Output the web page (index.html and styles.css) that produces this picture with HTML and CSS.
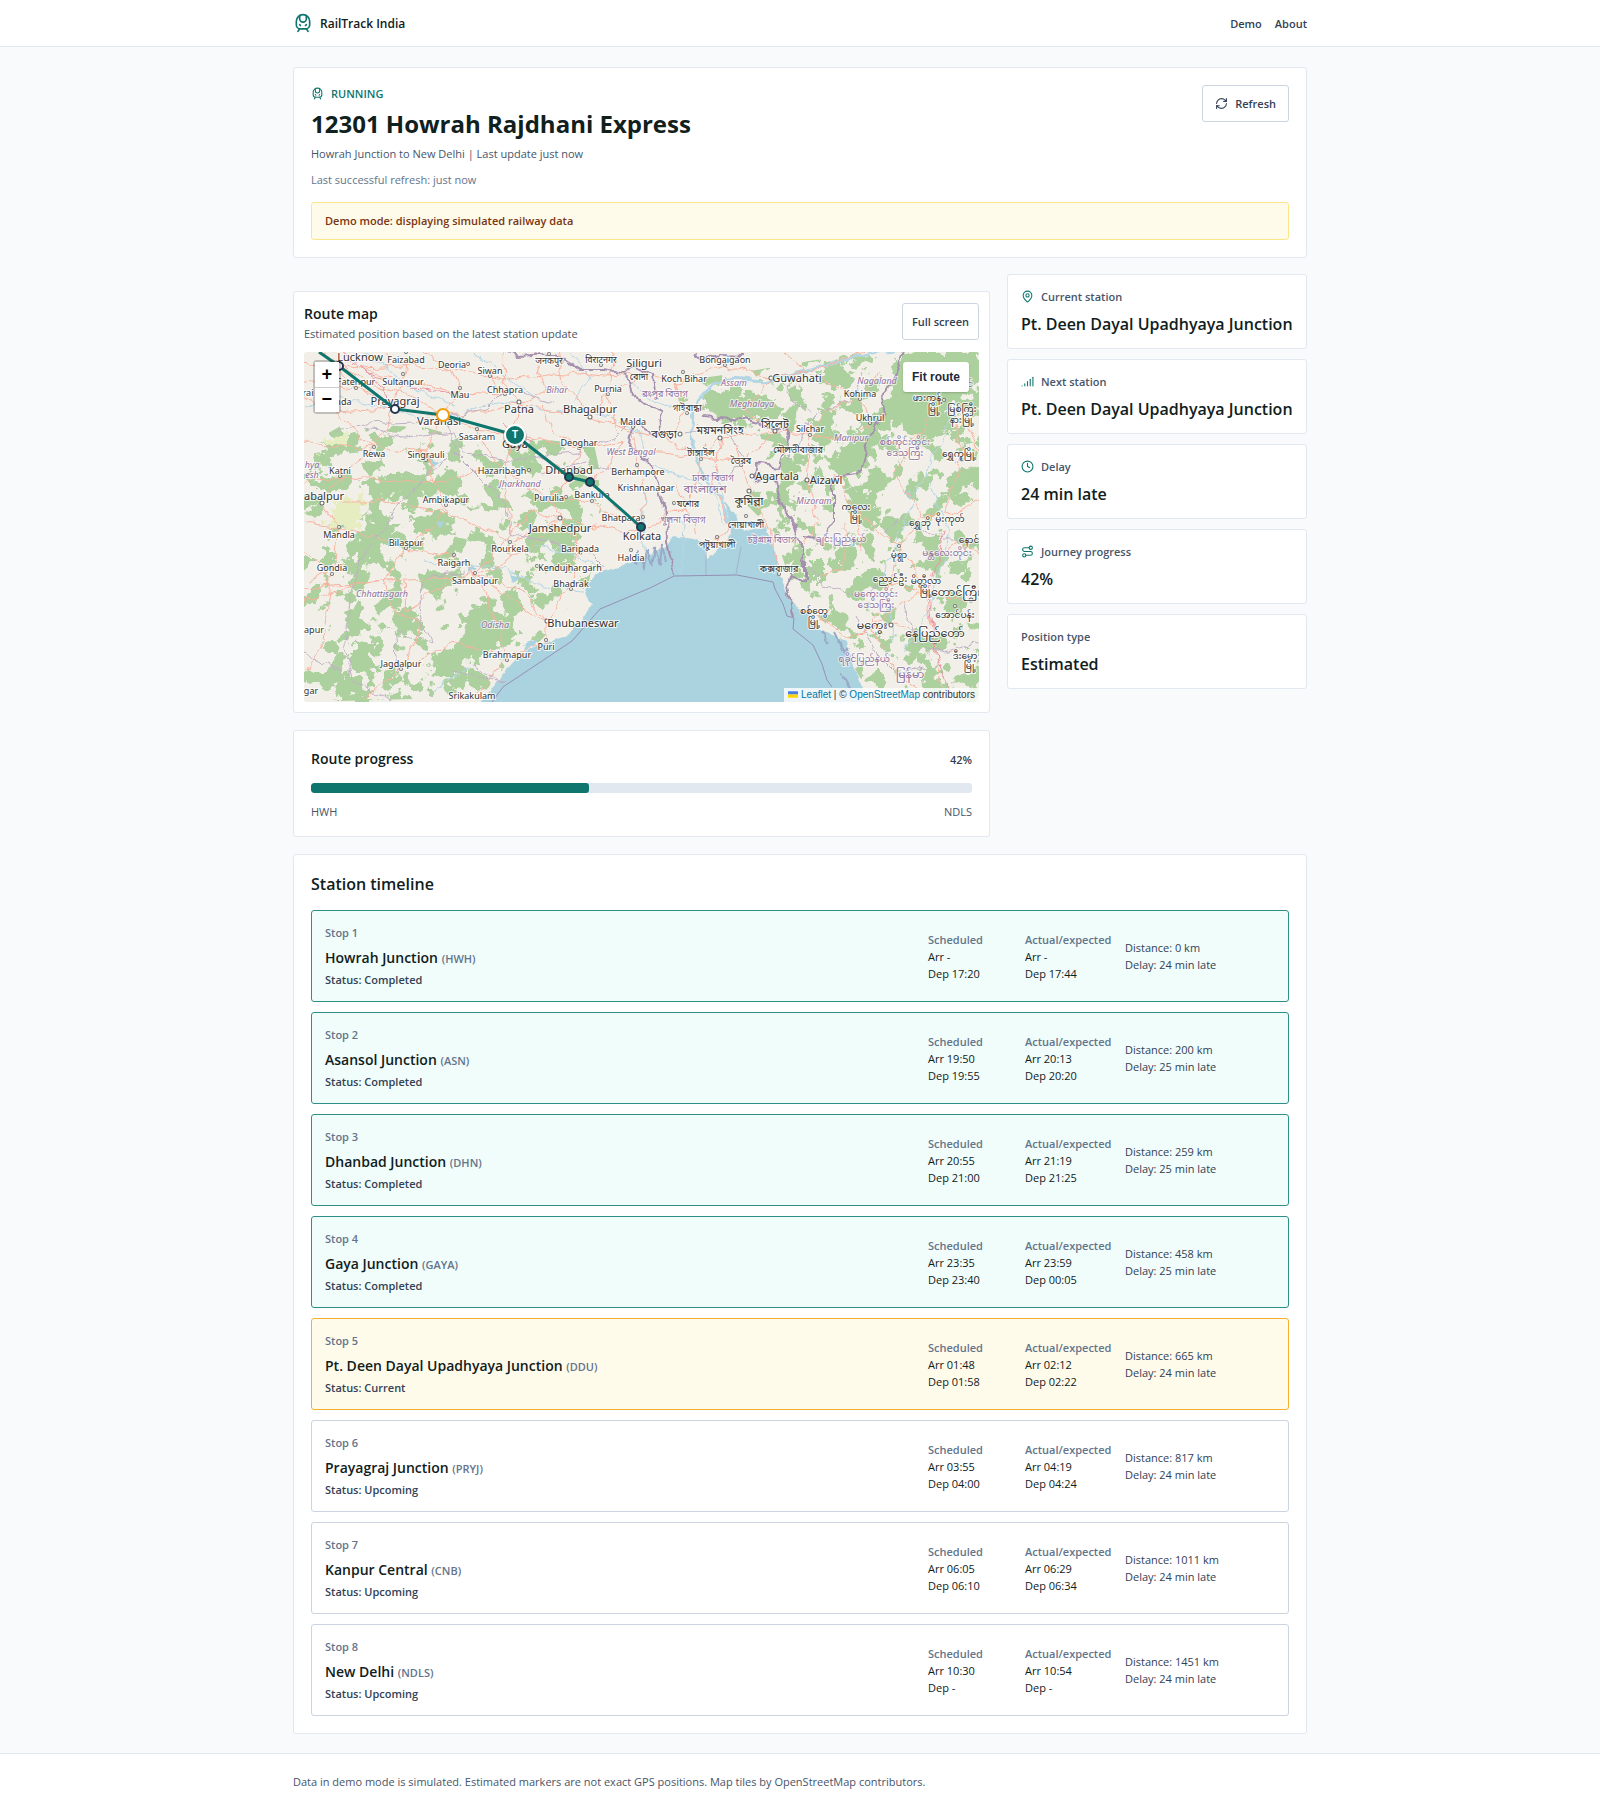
FILE: index.html
```html
<!DOCTYPE html>
<html lang="en">
<head>
<meta charset="utf-8">
<meta name="viewport" content="width=device-width, initial-scale=1">
<title>12301 Howrah Rajdhani Express - RailTrack India</title>
<link rel="stylesheet" href="styles.css">
</head>
<body>
<svg class="sprite" aria-hidden="true">
  <symbol id="i-train" viewBox="0 0 24 24"><path d="M8 3.1V7a4 4 0 0 0 8 0V3.1"/><path d="m9 15-1-1"/><path d="m15 15 1-1"/><path d="M9 19c-2.8 0-5-2.2-5-5v-4a8 8 0 0 1 16 0v4c0 2.8-2.2 5-5 5Z"/><path d="m8 19-2 3"/><path d="m16 19 2 3"/></symbol>
  <symbol id="i-refresh" viewBox="0 0 24 24"><path d="M3 12a9 9 0 0 1 9-9 9.75 9.75 0 0 1 6.74 2.74L21 8"/><path d="M21 3v5h-5"/><path d="M21 12a9 9 0 0 1-9 9 9.75 9.75 0 0 1-6.74-2.74L3 16"/><path d="M8 16H3v5"/></symbol>
  <symbol id="i-pin" viewBox="0 0 24 24"><path d="M20 10c0 4.993-5.539 10.193-7.399 11.799a1 1 0 0 1-1.202 0C9.539 20.193 4 14.993 4 10a8 8 0 0 1 16 0"/><circle cx="12" cy="10" r="3"/></symbol>
  <symbol id="i-signal" viewBox="0 0 24 24"><path d="M2 20h.01"/><path d="M7 20v-4"/><path d="M12 20v-8"/><path d="M17 20V8"/><path d="M22 4v16"/></symbol>
  <symbol id="i-clock" viewBox="0 0 24 24"><circle cx="12" cy="12" r="10"/><path d="M12 6v6l4 2"/></symbol>
  <symbol id="i-route" viewBox="0 0 24 24"><circle cx="6" cy="19" r="3"/><path d="M9 19h8.5a3.5 3.5 0 0 0 0-7h-11a3.5 3.5 0 0 1 0-7H15"/><circle cx="18" cy="5" r="3"/></symbol>
</svg>

<header class="site-header">
  <div class="container site-header-row">
    <a class="brand" href="#"><svg class="icon icon-lg"><use href="#i-train"/></svg>RailTrack India</a>
    <nav class="nav"><a href="#demo">Demo</a><a href="#about">About</a></nav>
  </div>
</header>

<main class="container main">
  <section class="card hero">
    <div class="hero-top">
      <div>
        <p class="running"><svg class="icon"><use href="#i-train"/></svg>RUNNING</p>
        <h1>12301 Howrah Rajdhani Express</h1>
        <p class="route-name">Howrah Junction to New Delhi | Last update just now</p>
        <p class="refreshed">Last successful refresh: just now</p>
      </div>
      <button class="btn" type="button"><svg class="icon"><use href="#i-refresh"/></svg>Refresh</button>
    </div>
    <p class="notice">Demo mode: displaying simulated railway data</p>
  </section>

  <div class="columns">
    <div class="left">
      <section class="card map-card">
        <div class="map-head">
          <div>
            <h2>Route map</h2>
            <p class="muted">Estimated position based on the latest station update</p>
          </div>
          <button class="btn btn-tight" type="button">Full screen</button>
        </div>
        <div class="map">
          <svg class="map-art" viewBox="0 0 675 350" preserveAspectRatio="xMidYMid slice" role="img" aria-label="Map of the route from Kolkata to Lucknow">
            <defs>
              <filter id="rough" x="-5%" y="-5%" width="110%" height="110%"><feTurbulence type="fractalNoise" baseFrequency="0.09" numOctaves="4" seed="4"/><feDisplacementMap in="SourceGraphic" scale="26" xChannelSelector="R" yChannelSelector="G"/></filter>
              <filter id="wiggle" filterUnits="userSpaceOnUse" x="-10" y="-10" width="700" height="375"><feTurbulence type="fractalNoise" baseFrequency="0.06" numOctaves="3" seed="9"/><feDisplacementMap in="SourceGraphic" scale="12" xChannelSelector="R" yChannelSelector="G"/></filter>
              <filter id="coast" filterUnits="userSpaceOnUse" x="-10" y="-10" width="700" height="375"><feTurbulence type="fractalNoise" baseFrequency="0.12" numOctaves="2" seed="2"/><feDisplacementMap in="SourceGraphic" scale="5" xChannelSelector="R" yChannelSelector="G"/></filter>
              <filter id="patches" filterUnits="userSpaceOnUse" x="0" y="0" width="675" height="350" color-interpolation-filters="sRGB"><feTurbulence type="fractalNoise" baseFrequency="0.05" numOctaves="5" seed="12"/><feColorMatrix values="0 0 0 0 0.678  0 0 0 0 0.82  0 0 0 0 0.62  40 0 0 0 -22.4"/><feComposite in2="SourceGraphic" operator="in"/></filter>
            </defs>
            <rect width="675" height="350" class="land"/>
            <path filter="url(#patches)" d="M0 95 40 72 120 75 190 95 240 88 290 92 300 140 290 200 285 230 240 285 180 345 0 350ZM370 30 440 20 560 0 675 0V350H570L530 280 490 240 470 180 440 150 470 90 380 70Z"/>
            <g class="forest" filter="url(#rough)">
              <path d="M398 42 415 34 430 40 450 38 470 48 478 60 468 68 445 66 420 66 398 60Z"/>
              <path d="M520 10 542 8 545 25 538 36 520 30Z"/>
              <path d="M600 0H675V35L650 50 640 80 610 85 590 70 570 92 560 125 530 120 525 105 545 90 560 70 585 50 590 20Z"/>
              <path d="M512 60 530 55 528 85 515 100 508 90Z"/>
              <path d="M475 105 490 105 488 140 480 175 474 150Z"/>
              <path d="M550 135 575 140 572 180 558 175 545 150Z"/>
              <path d="M530 195 550 190 552 215 532 213Z"/>
              <path d="M486 190 500 195 500 228 490 220ZM507 210 518 210 518 230 507 230Z"/>
              <path d="M635 140 655 115 672 128 650 145ZM640 75 660 75 655 95ZM645 210 665 200 660 222 648 225ZM616 300 630 310 640 345 620 340Z"/>
              <path d="M55 130 90 122 150 125 155 140 120 142 80 145Z"/>
              <path d="M110 165 140 160 150 180 130 188 110 182Z"/>
              <path d="M160 260 185 250 190 262 210 258 205 290 175 300 150 330 125 325 140 300 160 285Z"/>
              <path d="M50 290 70 300 72 320 50 318ZM35 315 60 330 65 350 30 345Z"/>
              <path d="M240 175 262 165 275 185 262 200 245 190ZM210 220 230 225 228 240 212 235ZM252 195 272 200 268 215 250 210Z"/>
              <path d="M75 200 60 225 45 240 50 205 60 175 80 165 100 170 85 190Z"/>
              <path d="M0 128 30 120 35 135 15 142ZM10 95 50 85 60 95 30 105ZM220 95 250 88 250 98 225 105ZM85 260 105 255 115 280 100 285Z"/>
            </g>
            <g class="scrub" filter="url(#rough)"><path d="M30 150 60 140 55 180 25 175ZM20 85 45 80 40 92 15 98Z"/></g>
            <g class="sea" filter="url(#coast)">
              <path d="M176 352 203 317 219 300 243 290 264 284 279 267 288 252 281 240 284 229 296 220 319 214 343 204 363 194 369 184 389 187 399 190 403 208 411 200 423 190 427 178 420 150 430 160 440 180 461 174 473 204 474 220 483 244 496 259 508 263 516 277 543 290 549 314 559 337 561 360 176 360Z"/>
              <path d="M222 290 234 286 230 294 219 299ZM206 223 215 226 209 231ZM164 213 173 217 165 219ZM126 108 138 110 130 115ZM134 168 141 170 135 176ZM600 142 606 136 607 148Z"/>
            </g>
            <g class="delta" filter="url(#coast)"><path d="M331 212 334 200 340 216 343 198 348 214 351 196 356 214 358 192 362 210M518 278 524 292M530 280 540 300 545 295M538 322 548 340M536 290 545 310"/></g>
            <g class="river" filter="url(#wiggle)">
              <path d="M0 55 40 45 91 60 139 68 190 50 240 58 290 60 335 80 345 110 380 125 410 140 420 170"/>
              <path d="M170 0 200 25 230 45M265 0 285 25 270 50M60 0 110 35 150 55M320 25 350 50 370 55"/>
              <path d="M230 195 280 205 300 220M120 210 200 215 240 235 281 238M165 315 130 340M340 130 342 200M620 120 645 180 625 260 600 300"/>
              <path d="M380 170 378 220M410 115 428 165M650 60 620 120 600 170 580 220 590 290"/>
            </g>
            <path class="river river-wide" filter="url(#wiggle)" d="M675-20 540 8 500 18 460 30 425 27 398 38 390 55 388 95 398 125 418 145 428 175"/>
            <g class="roads" filter="url(#wiggle)">
              <path d="M-5 10 56 16 102 14 148 18 200 28 250 20 300 24 340 22 372 30 421 14 467 26 520 14 560 0M20 0 32 14 52 36 91 57 139 63 173 78 211 83 265 125 286 130 337 175"/>
              <path d="M56 16 99 28 156 40 201 42 215 52 286 65 329 80 334 110 342 150 337 175M99 28 91 57 70 95 36 124 18 152 35 175 28 220 5 230"/>
              <path d="M139 63 122 100 142 160 102 196 80 228 0 236M80 228 150 225 190 218 240 185 256 166 245 145 265 125M256 166 276 196 267 236 243 270 243 288 203 306 168 348"/>
              <path d="M122 100 70 95 0 90M211 83 201 118 206 180 171 222 190 260 203 306M198 118 245 145 288 150 337 175M142 160 206 190 256 166M215 52 211 83 275 96 320 90M0 170 35 175 102 196 150 205 171 222 243 270"/>
              <path d="M80 228 90 260 120 270 97 315 60 345M97 315 150 290 203 306M28 220 20 290 0 320M256 166 320 180 337 175M148 18 156 40 139 63M186 22 201 42M253 0 260 30 286 65M304 42 340 22M0 30 52 36M0 130 36 124 122 130 198 118"/>
              <path d="M329 80 360 86 397 105 384 155 337 175M360 86 380 60 370 30M397 105 416 85 471 80 506 82 522 60 556 46 575 20M416 85 410 130 425 170 413 190M445 140 437 110 471 80M445 140 464 170 475 215M467 26 440 60 471 80M384 155 390 180"/>
              <path d="M506 82 503 130 515 170 500 190M556 46 566 72 545 90 506 82M480 0 510 25 556 46M552 160 595 195 622 240 631 290 640 350M595 195 616 165 646 160 675 150M586 230 568 273 590 320 625 345M510 262 545 285 590 270 631 290M622 240 664 250M595 195 586 230 622 240M616 165 590 120 630 60M643 200 655 190 675 200M540 170 540 215 516 225M560 200 552 160 530 120"/>
              <path d="M0 45 30 60 91 57M30 60 70 95M20 0 60 30 110 45 139 63M80 0 102 14 99 28M120 0 148 18M200 0 201 42M230 0 240 40 215 52M310 0 304 42 286 65M139 63 180 60 215 52M173 78 198 118M240 52 250 80 275 96 265 125M304 42 310 80 320 90 300 120 286 130"/>
              <path d="M40 150 80 150 142 160M100 228 102 260 150 225M171 222 220 240 243 270M206 180 230 160 256 166M0 200 28 220M0 250 40 235 80 228M400 90 397 105 437 110M345 100 397 105M370 130 384 155M430 90 437 110M570 273 600 250 622 240M660 60 675 100M640 160 658 108 650 60"/>
            </g>
            <g class="trunk" filter="url(#wiggle)"><path d="M30-5 60 20 110 35 150 40M56 16 80 34 91 57M25 25 10 60M640 180 625 240 632 300 650 350M200 70 211 83 230 90"/></g>
            <g class="border" filter="url(#wiggle)">
              <path d="M205 0 215 4 240 2 258 8 275 18 300 18 322 22 330 15 350 25 352 40 340 45M322 22 325 40 345 55 360 60 352 85 330 70M330 70 325 95 345 105 352 130 362 165 363 190 370 222"/>
              <path d="M400 65 440 68 480 78 486 85 475 115 455 112 452 130 470 125 480 160 490 170 500 200 500 228 485 222 483 235 490 265"/>
              <path d="M600 0 590 30 575 45 580 65 565 85 555 122 530 125 530 170 520 190 500 185M390 0 400 12 415 4 440 5"/>
            </g>
            <g class="border border-thin" filter="url(#wiggle)">
              <path d="M30 80 60 72 110 70 140 65 180 58 200 38 250 50M60 75 100 85 150 80 160 102 210 108 270 100 310 85 325 70M140 65 150 95 130 120 95 150 80 175 60 200 45 250 40 290 50 330 90 350M150 100 200 150 205 180 240 190 285 200 300 215M160 220 120 225 115 260 125 290 90 280 95 320M170 315 200 330 150 320M0 300 40 320M240 120 280 110 310 120M485 110 510 60 545 50 560 20M480 30 490 50 505 58M380 80 420 75 440 105 420 130 400 125M500 210 520 235 560 245 580 230M580 180 600 165 640 190 675 190M600 250 610 290 640 300 675 290M553 265 570 300 590 320 620 315"/>
            </g>
            <path class="maritime" d="M188 350 199 335 268 289 296 257 346 236 370 224 433 223 469 230 471 237 479 252 483 264 490 266 489 277 509 293 518 312 523 328 528 335"/>
            <path class="maritime maritime-faint" d="M402 223V190M432 222 437 195"/>

            <g class="dots">
              <path id="towns" d="M102 0h0M164 12h0M186 24h0M52 36h0M99 22h0M156 36h0M201 42h0M304 42h0M329 75h0M173 77h0M275 96h0M70 95h0M122 108h0M36 124h0M225 118h0M142 153h0M262 145h0M288 149h0M35 175h0M102 196h0M28 222h0M150 203h0M171 221h0M206 190h0M276 201h0M233 214h0M267 237h0M327 198h0M339 165h0M242 288h0M203 308h0M97 317h0M379 20h0M421 13h0M556 47h0M566 71h0M506 83h0M397 107h0M437 113h0M383 61h0M370 151h0M442 164h0M413 185h0M475 222h0M595 194h0M586 230h0M651 254h0M631 290h0M333 113h0M245 2h0M297 13h0M640 48h0M658 108h0"/>
            </g>
            <g class="dots dots-city">
              <path id="cities" d="M215 50h0M286 65h0M467 26h0M376 82h0M416 86h0M471 79h0M448 124h0M503 128h0M18 151h0M256 166h0M243 269h0M445 139h0M587 273h0M667 248h0"/>
            </g>
            <use href="#towns" class="dots-core"/>
            <use href="#cities" class="dots-core dots-core-city"/>

            <g class="town">
              <text x="102" y="11">Faizabad</text><text x="148" y="16">Deoria</text><text x="186" y="22">Siwan</text><text x="52" y="33">Fatehpur</text><text x="99" y="33">Sultanpur</text><text x="156" y="46">Mau</text><text x="201" y="41">Chhapra</text><text x="304" y="40">Purnia</text><text x="329" y="73">Malda</text><text x="173" y="88">Sasaram</text><text x="275" y="94">Deoghar</text><text x="70" y="105">Rewa</text><text x="122" y="106">Singrauli</text><text x="36" y="122">Katni</text><text x="198" y="122">Hazaribagh</text><text x="334" y="123">Berhampore</text><text x="342" y="139">Krishnanagar</text><text x="142" y="151">Ambikapur</text><text x="245" y="149">Purulia</text><text x="288" y="146">Bankura</text><text x="245" y="12">जनकपुर</text><text x="297" y="11">विराटनगर</text>
              <text x="380" y="30">Koch Bihar</text><text x="421" y="11">Bongaigaon</text><text x="556" y="45">Kohima</text><text x="566" y="69">Ukhrul</text><text x="506" y="80">Silchar</text><text x="34" y="53">Banda</text><text x="4" y="44">rai</text>
              <text x="35" y="186">Mandla</text><text x="102" y="194">Bilaspur</text><text x="28" y="219">Gondia</text><text x="150" y="214">Raigarh</text><text x="171" y="232">Sambalpur</text><text x="206" y="200">Rourkela</text><text x="276" y="200">Baripada</text><text x="266" y="219">Kendujhargarh</text><text x="267" y="235">Bhadrak</text><text x="327" y="209">Haldia</text><text x="317" y="169">Bhatpara</text><text x="242" y="298">Puri</text><text x="203" y="306">Brahmapur</text><text x="168" y="347">Srikakulam</text><text x="97" y="315">Jagdalpur</text><text x="10" y="281">apur</text><text x="7" y="342">gar</text>
              <text x="383" y="59">গাইবান্ধা</text><text x="437" y="112">ভৈরব</text><text x="397" y="104">টাঙ্গাইল</text><text x="494" y="101">মৌলভীবাজার</text><text x="384" y="155">যশোর</text><text x="442" y="176">নোয়াখালী</text><text x="413" y="196">পটুয়াখালী</text><text x="475" y="220">কক্সবাজার</text><text x="335" y="28">বোদা</text>
              <text x="623" y="49">ဖားကန့်</text><text x="630" y="60">မြို့</text><text x="658" y="60">မြစ်ကြီး</text><text x="658" y="71">နားမြို့</text><text x="655" y="105">ရွှေကူမြို့</text><text x="552" y="158">ကလေး</text><text x="552" y="168">မြို့</text><text x="616" y="174">ရွှေဘို</text><text x="646" y="170">မိုးကုတ်</text><text x="665" y="191">နောင်</text><text x="595" y="206">မုံရွာ</text><text x="586" y="230">ညောင်ဦး</text><text x="622" y="232">မိတ္ထီလာ</text><text x="622" y="242">မြို့</text><text x="651" y="266">အောင်ပန်း</text><text x="510" y="262">စစ်တွေ</text><text x="510" y="273">မြို့</text><text x="661" y="307">ဒီးမော့</text><text x="666" y="317">မြို့</text>
            </g>
            <g class="town city">
              <text x="56" y="9">Lucknow</text><text x="91" y="53">Prayagraj</text><text x="215" y="61">Patna</text><text x="286" y="61">Bhagalpur</text><text x="135" y="73">Varanasi</text><text x="211" y="96">Gaya</text><text x="265" y="122">Dhanbad</text><text x="20" y="148">abalpur</text><text x="340" y="15">Siliguri</text><text x="493" y="30">Guwahati</text><text x="473" y="128">Agartala</text><text x="522" y="132">Aizawl</text><text x="256" y="180">Jamshedpur</text><text x="338" y="188">Kolkata</text><text x="279" y="275">Bhubaneswar</text>
              <text x="360" y="86">বগুড়া</text><text x="416" y="82">ময়মনসিংহ</text><text x="471" y="76">সিলেট</text><text x="445" y="153">কুমিল্লা</text><text x="568" y="277">မကွေး</text><text x="631" y="285">နေပြည်တော်</text><text x="652" y="244">တောင်ကြီး</text>
            </g>
            <g class="region">
              <text x="253" y="41">Bihar</text><text x="327" y="103">West Bengal</text><text x="8" y="116">hya</text><text x="8" y="126">esh</text><text x="216" y="135">Jharkhand</text><text x="430" y="34">Assam</text><text x="448" y="55">Meghalaya</text><text x="573" y="32">Nagaland</text><text x="547" y="89">Manipur</text><text x="510" y="152">Mizoram</text><text x="78" y="245">Chhattisgarh</text><text x="191" y="276">Odisha</text>
            </g>
            <g class="region upright">
              <text x="361" y="45">রংপুর বিভাগ</text><text x="409" y="129">ঢাকা বিভাগ</text><text x="379" y="171">খুলনা বিভাগ</text><text x="468" y="191">চট্টগ্রাম বিভাগ</text><text x="601" y="93">စစ်ကိုင်းတိုင်း</text><text x="601" y="104">ဒေသကြီး</text><text x="537" y="190">ချင်းပြည်နယ်</text><text x="643" y="204">မန္တလေးတိုင်း</text><text x="572" y="245">မကွေးတိုင်း</text><text x="572" y="256">ဒေသကြီး</text><text x="560" y="310">ရခိုင်ပြည်နယ်</text><text x="662" y="35">ချင်</text>
            </g>
            <g class="region upright country"><text x="401" y="141">বাংলাদেশ</text><text x="606" y="326">မြန်မာ</text></g>

            <path class="route" d="M15 0 35 14 91 57 139 63 211 83 265 125 286 130 337 175"/>
            <g class="stop-open"><circle cx="35" cy="14" r="4"/><circle cx="91" cy="57" r="4"/></g>
            <g class="stop-done"><circle cx="265" cy="125" r="4"/><circle cx="286" cy="130" r="4"/><circle cx="337" cy="175" r="4"/></g>
            <circle class="stop-now" cx="139" cy="63" r="6"/>
            <circle class="train-shadow" cx="211" cy="85" r="12"/>
            <circle class="train-dot" cx="211" cy="83" r="10"/>
            <text class="train-mark" x="211" y="86">T</text>
          </svg>
          <div class="zoom"><button type="button" aria-label="Zoom in">+</button><button type="button" aria-label="Zoom out">−</button></div>
          <button class="fit" type="button">Fit route</button>
          <div class="attribution"><svg class="flag" viewBox="0 0 12 8" aria-hidden="true"><path fill="#4c7be1" d="M0 0h12v4H0z"/><path fill="#ffd500" d="M0 4h12v4H0z"/></svg> <a href="#leaflet">Leaflet</a> | © <a href="#osm">OpenStreetMap</a> contributors</div>
        </div>
      </section>

      <section class="card progress-card">
        <div class="split"><h2>Route progress</h2><span class="percent">42%</span></div>
        <div class="bar" role="progressbar" aria-label="Route progress" aria-valuenow="42" aria-valuemin="0" aria-valuemax="100"><div class="bar-fill" style="width:42%"></div></div>
        <div class="split muted"><span>HWH</span><span>NDLS</span></div>
      </section>
    </div>

    <aside class="facts">
      <div class="card fact"><p class="fact-label"><svg class="icon"><use href="#i-pin"/></svg>Current station</p><p class="fact-value">Pt. Deen Dayal Upadhyaya Junction</p></div>
      <div class="card fact"><p class="fact-label"><svg class="icon"><use href="#i-signal"/></svg>Next station</p><p class="fact-value">Pt. Deen Dayal Upadhyaya Junction</p></div>
      <div class="card fact"><p class="fact-label"><svg class="icon"><use href="#i-clock"/></svg>Delay</p><p class="fact-value">24 min late</p></div>
      <div class="card fact"><p class="fact-label"><svg class="icon"><use href="#i-route"/></svg>Journey progress</p><p class="fact-value">42%</p></div>
      <div class="card fact"><p class="fact-label">Position type</p><p class="fact-value">Estimated</p></div>
    </aside>
  </div>

  <section class="card timeline">
    <h2>Station timeline</h2>
    <ol class="stops">
      <li class="stop completed"><div><p class="stop-no">Stop 1</p><h3>Howrah Junction <span>(HWH)</span></h3><p class="status">Status: Completed</p></div><div class="times"><p class="times-label">Scheduled</p><p>Arr -</p><p>Dep 17:20</p></div><div class="times"><p class="times-label">Actual/expected</p><p>Arr -</p><p>Dep 17:44</p></div><div class="extra"><p>Distance: 0 km</p><p>Delay: 24 min late</p></div></li>
      <li class="stop completed"><div><p class="stop-no">Stop 2</p><h3>Asansol Junction <span>(ASN)</span></h3><p class="status">Status: Completed</p></div><div class="times"><p class="times-label">Scheduled</p><p>Arr 19:50</p><p>Dep 19:55</p></div><div class="times"><p class="times-label">Actual/expected</p><p>Arr 20:13</p><p>Dep 20:20</p></div><div class="extra"><p>Distance: 200 km</p><p>Delay: 25 min late</p></div></li>
      <li class="stop completed"><div><p class="stop-no">Stop 3</p><h3>Dhanbad Junction <span>(DHN)</span></h3><p class="status">Status: Completed</p></div><div class="times"><p class="times-label">Scheduled</p><p>Arr 20:55</p><p>Dep 21:00</p></div><div class="times"><p class="times-label">Actual/expected</p><p>Arr 21:19</p><p>Dep 21:25</p></div><div class="extra"><p>Distance: 259 km</p><p>Delay: 25 min late</p></div></li>
      <li class="stop completed"><div><p class="stop-no">Stop 4</p><h3>Gaya Junction <span>(GAYA)</span></h3><p class="status">Status: Completed</p></div><div class="times"><p class="times-label">Scheduled</p><p>Arr 23:35</p><p>Dep 23:40</p></div><div class="times"><p class="times-label">Actual/expected</p><p>Arr 23:59</p><p>Dep 00:05</p></div><div class="extra"><p>Distance: 458 km</p><p>Delay: 25 min late</p></div></li>
      <li class="stop current"><div><p class="stop-no">Stop 5</p><h3>Pt. Deen Dayal Upadhyaya Junction <span>(DDU)</span></h3><p class="status">Status: Current</p></div><div class="times"><p class="times-label">Scheduled</p><p>Arr 01:48</p><p>Dep 01:58</p></div><div class="times"><p class="times-label">Actual/expected</p><p>Arr 02:12</p><p>Dep 02:22</p></div><div class="extra"><p>Distance: 665 km</p><p>Delay: 24 min late</p></div></li>
      <li class="stop"><div><p class="stop-no">Stop 6</p><h3>Prayagraj Junction <span>(PRYJ)</span></h3><p class="status">Status: Upcoming</p></div><div class="times"><p class="times-label">Scheduled</p><p>Arr 03:55</p><p>Dep 04:00</p></div><div class="times"><p class="times-label">Actual/expected</p><p>Arr 04:19</p><p>Dep 04:24</p></div><div class="extra"><p>Distance: 817 km</p><p>Delay: 24 min late</p></div></li>
      <li class="stop"><div><p class="stop-no">Stop 7</p><h3>Kanpur Central <span>(CNB)</span></h3><p class="status">Status: Upcoming</p></div><div class="times"><p class="times-label">Scheduled</p><p>Arr 06:05</p><p>Dep 06:10</p></div><div class="times"><p class="times-label">Actual/expected</p><p>Arr 06:29</p><p>Dep 06:34</p></div><div class="extra"><p>Distance: 1011 km</p><p>Delay: 24 min late</p></div></li>
      <li class="stop"><div><p class="stop-no">Stop 8</p><h3>New Delhi <span>(NDLS)</span></h3><p class="status">Status: Upcoming</p></div><div class="times"><p class="times-label">Scheduled</p><p>Arr 10:30</p><p>Dep -</p></div><div class="times"><p class="times-label">Actual/expected</p><p>Arr 10:54</p><p>Dep -</p></div><div class="extra"><p>Distance: 1451 km</p><p>Delay: 24 min late</p></div></li>
    </ol>
  </section>
</main>

<footer class="site-footer"><div class="container">Data in demo mode is simulated. Estimated markers are not exact GPS positions. Map tiles by OpenStreetMap contributors.</div></footer>
</body>
</html>
```
FILE: styles.css
```css
*, *::before, *::after { box-sizing: border-box; }
body {
  margin: 0;
  background: #f8fafc;
  color: #10201c;
  font-family: "Segoe UI", "Open Sans", "Noto Sans", sans-serif;
  font-size: 11px;
  line-height: 17px;
}
h1, h2, h3, p, ol { margin: 0; padding: 0; }
a { color: inherit; text-decoration: none; }
button { font: inherit; color: inherit; cursor: pointer; }
.sprite { display: none; }
.icon { width: 13px; height: 13px; flex: none; fill: none; stroke: currentColor; stroke-width: 2; stroke-linecap: round; stroke-linejoin: round; }
.icon-lg { width: 20px; height: 20px; color: #0f766e; }
.container { width: 100%; max-width: 1046px; margin: 0 auto; padding: 0 16px; }

.site-header { background: #fff; border-bottom: 1px solid #e2e8f0; }
.site-header-row { display: flex; align-items: center; justify-content: space-between; min-height: 46px; }
.brand { display: flex; align-items: center; gap: 7px; font-size: 12px; font-weight: 600; }
.nav { display: flex; gap: 13px; color: #334155; font-weight: 600; }

.main { padding-top: 20px; padding-bottom: 19px; }
.card { background: #fff; border: 1px solid #e2e8f0; border-radius: 3px; }
.btn { display: flex; align-items: center; justify-content: center; gap: 7px; flex: none; height: 37px; padding: 0 12px; background: #fff; border: 1px solid #cbd5e1; border-radius: 3px; color: #334155; font-weight: 600; }
.btn-tight { padding: 0 9px; }
.muted { color: #475569; }

.hero { padding: 17px; margin-bottom: 16px; }
.hero-top { display: flex; justify-content: space-between; align-items: flex-start; gap: 16px; }
.running { display: flex; align-items: center; gap: 7px; color: #0f766e; font-weight: 600; }
h1 { margin-top: 7px; font-size: 24px; line-height: 30px; font-weight: 700; }
.route-name { margin-top: 6px; color: #475569; }
.refreshed { margin-top: 9px; color: #64748b; }
.notice { margin-top: 14px; padding: 10px 13px; line-height: 16px; background: #fffbeb; border: 1px solid #fde68a; border-radius: 3px; color: #78350f; font-weight: 600; }

.columns { display: grid; grid-template-columns: minmax(0, 1fr) 300px; gap: 17px; margin-bottom: 17px; align-items: start; }
.left { display: grid; gap: 17px; padding-top: 17px; }
.map-card { padding: 11px 10px 10px; }
.map-head { display: flex; justify-content: space-between; align-items: flex-start; margin-bottom: 10px; }
h2 { font-size: 14px; line-height: 24px; font-weight: 600; }
.map-head h2 { line-height: 22px; }

.map { position: relative; height: 350px; overflow: hidden; border-radius: 3px; background: #f2efe9; }
.map-art { display: block; width: 100%; height: 100%; }
.land { fill: #f2efe9; }
.forest { fill: #add19e; }
.scrub { fill: #e6edc0; }
.sea { fill: #aad3df; }
.delta { fill: none; stroke: #9aa9c8; stroke-width: 2; }
.river { fill: none; stroke: #b4d6e4; stroke-width: 1; }
.river-wide { stroke-width: 3; }
.roads { fill: none; stroke: #f9b29e; stroke-width: 1; }
.trunk { fill: none; stroke: #e892a2; stroke-width: 1; }
.border { fill: none; stroke: #a58fae; stroke-width: 2; }
.border-thin { stroke: #bfb0c4; stroke-width: 1; }
.maritime { fill: none; stroke: #9590b3; stroke-width: 1; }
.maritime-faint { stroke: #a3b3cb; }
.dots { fill: none; stroke: #777; stroke-width: 4; stroke-linecap: round; }
.dots-city { stroke: #666; stroke-width: 5; }
#towns, #cities { stroke-linecap: round; }
.dots-core { fill: none; stroke: #fff; stroke-width: 2; }
.dots-core-city { stroke-width: 3; }
.town { font-family: "Noto Sans", "Noto Sans Bengali", "Noto Sans Myanmar", "Noto Sans Devanagari", sans-serif; font-size: 9px; text-anchor: middle; fill: #333; stroke: #fffc; stroke-width: 2; paint-order: stroke; }
.city { font-size: 11px; }
.region { font-family: "Noto Sans", "Noto Sans Bengali", "Noto Sans Myanmar", sans-serif; font-size: 9px; font-style: italic; text-anchor: middle; fill: #8d6f9c; stroke: #fffa; stroke-width: 2; paint-order: stroke; }
.upright { font-style: normal; }
.country { font-size: 11px; }
.route { fill: none; stroke: #0f766e; stroke-width: 3; stroke-linejoin: round; }
.stop-open { fill: #fff; stroke: #26344f; stroke-width: 2; }
.stop-done { fill: #0f766e; stroke: #26344f; stroke-width: 2; }
.stop-now { fill: #fff; stroke: #f59e0b; stroke-width: 2; }
.train-shadow { fill: #0003; }
.train-dot { fill: #0f766e; stroke: #fff; stroke-width: 2; }
.train-mark { font: 700 10px "Liberation Sans", sans-serif; fill: #fff; text-anchor: middle; }
.zoom { position: absolute; top: 8px; left: 9px; display: grid; border: 2px solid #0003; border-radius: 4px; background-clip: padding-box; }
.zoom button { width: 24px; height: 25px; padding: 0; border: 0; background: #fff; color: #000; font: 700 18px/24px "Liberation Mono", monospace; }
.zoom button + button { border-top: 1px solid #ccc; }
.fit { position: absolute; top: 10px; right: 10px; height: 30px; padding: 0 9px; border: 0; border-radius: 3px; background: #fff; color: #1e293b; font: 700 12px "Liberation Sans", sans-serif; box-shadow: 0 1px 2px #0003; }
.attribution { position: absolute; right: 0; bottom: 0; padding: 0 4px; background: #fffc; color: #333; font: 10px/14px "Liberation Sans", sans-serif; white-space: nowrap; }
.attribution a { color: #0078a8; }
.flag { width: 10px; height: 7px; }

.progress-card { padding: 16px 17px; }
.split { display: flex; justify-content: space-between; align-items: center; }
.percent { color: #334155; font-weight: 600; }
.bar { height: 10px; margin: 12px 0 10px; background: #e2e8f0; border-radius: 3px; overflow: hidden; }
.bar-fill { height: 100%; background: #0f766e; border-radius: 3px; }

.facts { display: grid; gap: 10px; }
.fact { padding: 13px 13px 12px; }
.fact-label { display: flex; align-items: center; gap: 7px; color: #475569; font-weight: 600; }
.fact-label .icon { color: #0f766e; }
.fact-value { margin-top: 7px; font-size: 16px; line-height: 24px; font-weight: 600; white-space: nowrap; }

.timeline { padding: 17px; }
.timeline h2 { font-size: 16px; }
.stops { display: grid; gap: 10px; margin-top: 14px; list-style: none; }
.stop { display: grid; grid-template-columns: minmax(0, 1fr) 84px 87px 150px; gap: 13px; align-items: center; padding: 13px; border: 1px solid #cbd5e1; border-radius: 3px; background: #fff; }
.completed { border-color: #2f8f86; background: #f0fdfa; }
.current { border-color: #f5b030; background: #fffbeb; }
.stop-no, .times-label { color: #64748b; font-weight: 600; }
h3 { margin: 5px 0 2px; font-size: 14px; line-height: 23px; font-weight: 600; }
h3 span { color: #64748b; font-size: 11px; line-height: 17px; }
.status { color: #334155; font-weight: 600; }
.times { white-space: nowrap; }
.extra { color: #334155; }

.site-footer { background: #fff; border-top: 1px solid #e2e8f0; padding: 19px 0 21px; color: #475569; }
```
